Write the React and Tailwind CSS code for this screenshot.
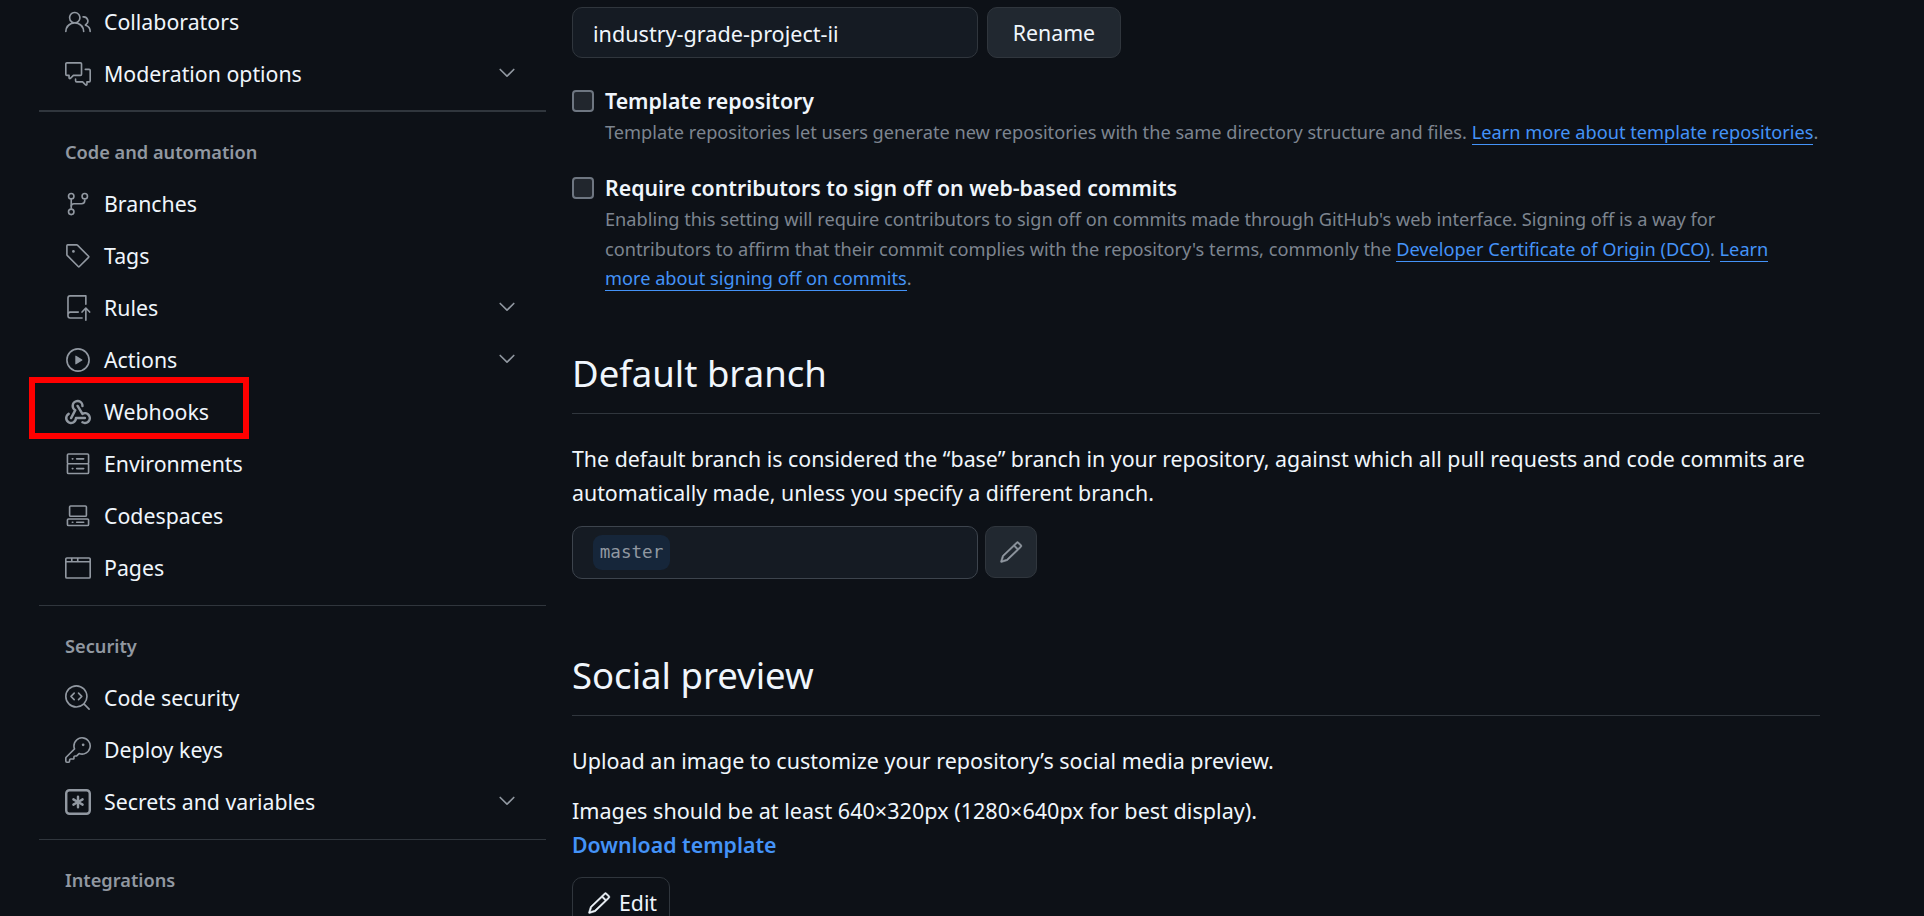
import {
  GoChevronDown,
  GoCodescan,
  GoCodespaces,
  GoCommentDiscussion,
  GoBrowser,
  GoGitBranch,
  GoKey,
  GoPencil,
  GoPeople,
  GoPlay,
  GoRepoPush,
  GoServer,
  GoTag,
} from "react-icons/go";

const WebhookIcon = ({ className }) => (
  <svg viewBox="0 0 16 16" fill="currentColor" className={className}>
    <path d="M5.5 4.25a2.25 2.25 0 0 1 4.5 0 .75.75 0 0 0 1.5 0 3.75 3.75 0 1 0-6.14 2.889l-2.272 4.258a.75.75 0 0 0 1.324.706L7 7.25a.75.75 0 0 0-.309-1.015A2.25 2.25 0 0 1 5.5 4.25Z" />
    <path d="M7.364 3.607a.75.75 0 0 1 1.03.257l2.608 4.349a3.75 3.75 0 1 1-.628 6.785.75.75 0 0 1 .752-1.299 2.25 2.25 0 1 0-.033-3.88.75.75 0 0 1-1.03-.256L7.107 4.636a.75.75 0 0 1 .257-1.03Z" />
    <path d="M2.9 8.776A.75.75 0 0 1 2.625 9.8 2.25 2.25 0 1 0 6 11.75a.75.75 0 0 1 .75-.751h5.5a.75.75 0 0 1 0 1.5H7.425a3.751 3.751 0 1 1-5.55-3.998.75.75 0 0 1 1.024.274Z" />
  </svg>
);

const KeyAsteriskIcon = ({ className }) => (
  <svg viewBox="0 0 16 16" fill="currentColor" className={className}>
    <path d="M0 2.75A2.75 2.75 0 0 1 2.75 0h10.5A2.75 2.75 0 0 1 16 2.75v10.5A2.75 2.75 0 0 1 13.25 16H2.75A2.75 2.75 0 0 1 0 13.25ZM2.75 1.5c-.69 0-1.25.56-1.25 1.25v10.5c0 .69.56 1.25 1.25 1.25h10.5c.69 0 1.25-.56 1.25-1.25V2.75c0-.69-.56-1.25-1.25-1.25Z" />
    <path d="M8 4a.75.75 0 0 1 .75.75V6.7l1.69-.975a.75.75 0 0 1 .75 1.3L9.5 8l1.69.975a.75.75 0 0 1-.75 1.3L8.75 9.3v1.95a.75.75 0 0 1-1.5 0V9.3l-1.69.975a.75.75 0 0 1-.75-1.3L6.5 8l-1.69-.975a.75.75 0 0 1 .75-1.3l1.69.975V4.75A.75.75 0 0 1 8 4Z" />
  </svg>
);

const NavItem = ({ icon: Icon, label, caret }) => (
  <div className="flex h-[52px] items-center pl-[65px] pr-[26px] text-[21.3px] text-[#f0f6fc]">
    <Icon className="h-[26px] w-[26px] shrink-0 text-[#9198a1]" />
    <span className="ml-[13px] flex-1 leading-none">{label}</span>
    {caret && <GoChevronDown className="-mt-[2px] h-[26px] w-[26px] text-[#9198a1]" />}
  </div>
);

const NavHeading = ({ children }) => (
  <div className="flex h-[52px] items-center pl-[65px] pt-[2px] text-[18.2px] font-semibold text-[#9198a1]">{children}</div>
);

const NavDivider = ({ thick }) => <div className={`ml-[39px] bg-[#30363d] ${thick ? "h-[2px]" : "h-px"}`} />;

const Sidebar = () => (
  <aside className="w-[546px] shrink-0 -mt-[4px]">
    <NavItem icon={GoPeople} label="Collaborators" />
    <NavItem icon={GoCommentDiscussion} label="Moderation options" caret />
    <div className="mt-[10px] mb-[14px]">
      <NavDivider thick />
    </div>
    <NavHeading>Code and automation</NavHeading>
    <NavItem icon={GoGitBranch} label="Branches" />
    <NavItem icon={GoTag} label="Tags" />
    <NavItem icon={GoRepoPush} label="Rules" caret />
    <NavItem icon={GoPlay} label="Actions" caret />
    <NavItem icon={WebhookIcon} label="Webhooks" />
    <NavItem icon={GoServer} label="Environments" />
    <NavItem icon={GoCodespaces} label="Codespaces" />
    <NavItem icon={GoBrowser} label="Pages" />
    <div className="mt-[11px] mb-[14px]">
      <NavDivider />
    </div>
    <NavHeading>Security</NavHeading>
    <NavItem icon={GoCodescan} label="Code security" />
    <NavItem icon={GoKey} label="Deploy keys" />
    <NavItem icon={KeyAsteriskIcon} label="Secrets and variables" caret />
    <div className="mt-[11px] mb-[14px]">
      <NavDivider />
    </div>
    <NavHeading>Integrations</NavHeading>
  </aside>
);

const Anchor = ({ children }) => (
  <a className="border-b border-[#4493f8] text-[#4493f8]">{children}</a>
);

const CheckOption = ({ title, children }) => (
  <div className="flex">
    <span className="mt-[1px] h-[22px] w-[22px] shrink-0 rounded-[4px] border-[2.5px] border-[#6e7681] bg-[#21262d]" />
    <div className="ml-[11px]">
      <div className="text-[21.3px] font-semibold leading-[24px] text-[#f0f6fc]">{title}</div>
      <p className="mt-[5px] text-[18.2px] leading-[29.3px] text-[#7d8590]">{children}</p>
    </div>
  </div>
);

const SectionTitle = ({ children }) => (
  <h2 className="border-b border-[#30363d] pb-[13px] text-[36.5px] font-normal leading-[54px] text-[#f0f6fc]">
    {children}
  </h2>
);

const Main = () => (
  <main className="w-[1248px] shrink-0 pt-[7px] ml-[26px]">
    <div className="flex gap-[9px]">
      <div className="flex h-[51px] w-[406px] items-center rounded-[10px] border border-[#30363d] bg-[#151b23] px-5 pt-[3px] text-[21.6px] text-[#f0f6fc]">
        industry-grade-project-ii
      </div>
      <button className="h-[51px] w-[134px] rounded-[10px] border border-[#30363d] bg-[#212830] text-[21.3px] text-[#f0f6fc]">
        Rename
      </button>
    </div>

    <div className="mt-[31px]">
      <CheckOption title="Template repository">
        Template repositories let users generate new repositories with the same directory structure and files.{" "}
        <Anchor>Learn more about template repositories</Anchor>.
      </CheckOption>
    </div>
    <div className="mt-[29px] pr-[30px]">
      <CheckOption title="Require contributors to sign off on web-based commits">
        Enabling this setting will require contributors to sign off on commits made through GitHub's web interface.
        Signing off is a way for contributors to affirm that their commit complies with the repository's terms, commonly
        the <Anchor>Developer Certificate of Origin (DCO)</Anchor>. <Anchor>Learn more about signing off on commits</Anchor>.
      </CheckOption>
    </div>

    <div className="mt-[53px]">
      <SectionTitle>Default branch</SectionTitle>
      <p className="mt-[28px] text-[21.35px] leading-[34px] text-[#f0f6fc]">
        The default branch is considered the “base” branch in your repository, against which all pull requests and code
        commits are automatically made, unless you specify a different branch.
      </p>
      <div className="mt-4 flex gap-[7px]">
        <div className="flex h-[53px] w-[406px] items-center rounded-[10px] border border-[#3d444d] bg-[#151b23] pl-[20px]">
          <span className="flex h-[35px] w-[77px] items-center justify-center rounded-[9px] bg-[#16263a] font-['DejaVu_Sans_Mono',monospace] text-[17.6px] text-[#9198a1]">
            master
          </span>
        </div>
        <button className="flex h-[52px] w-[52px] items-center justify-center rounded-[10px] border border-[#30363d] bg-[#212830]">
          <GoPencil className="h-6 w-6 stroke-[0.5px] text-[#9198a1]" />
        </button>
      </div>
    </div>

    <div className="mt-[69px]">
      <SectionTitle>Social preview</SectionTitle>
      <p className="mt-[28px] text-[21.5px] leading-[33px] text-[#f0f6fc]">
        Upload an image to customize your repository’s social media preview.
      </p>
      <p className="mt-[16.5px] text-[21.6px] leading-[33px] text-[#f0f6fc]">
        Images should be at least 640×320px (1280×640px for best display).
      </p>
      <a className="mt-[1.5px] block text-[21.3px] font-semibold leading-[33px] text-[#4493f8]">Download template</a>
      <button className="mt-4 flex h-[51px] w-[98px] items-center justify-center gap-2 rounded-[10px] border border-[#30363d] pl-[2px] text-[21.3px] text-[#f0f6fc]">
        <GoPencil className="h-6 w-6 stroke-[0.5px]" />
        Edit
      </button>
    </div>
  </main>
);

const App = () => (
  <div className="relative flex h-[916px] overflow-hidden bg-[#0d1117] font-['Noto_Sans',sans-serif]">
    <Sidebar />
    <Main />
    {/* highlight box from the annotated screenshot */}
    <div className="absolute left-[29px] top-[377px] h-[62px] w-[220px] border-[6px] border-[#ff0000]" />
  </div>
);

export default App;
